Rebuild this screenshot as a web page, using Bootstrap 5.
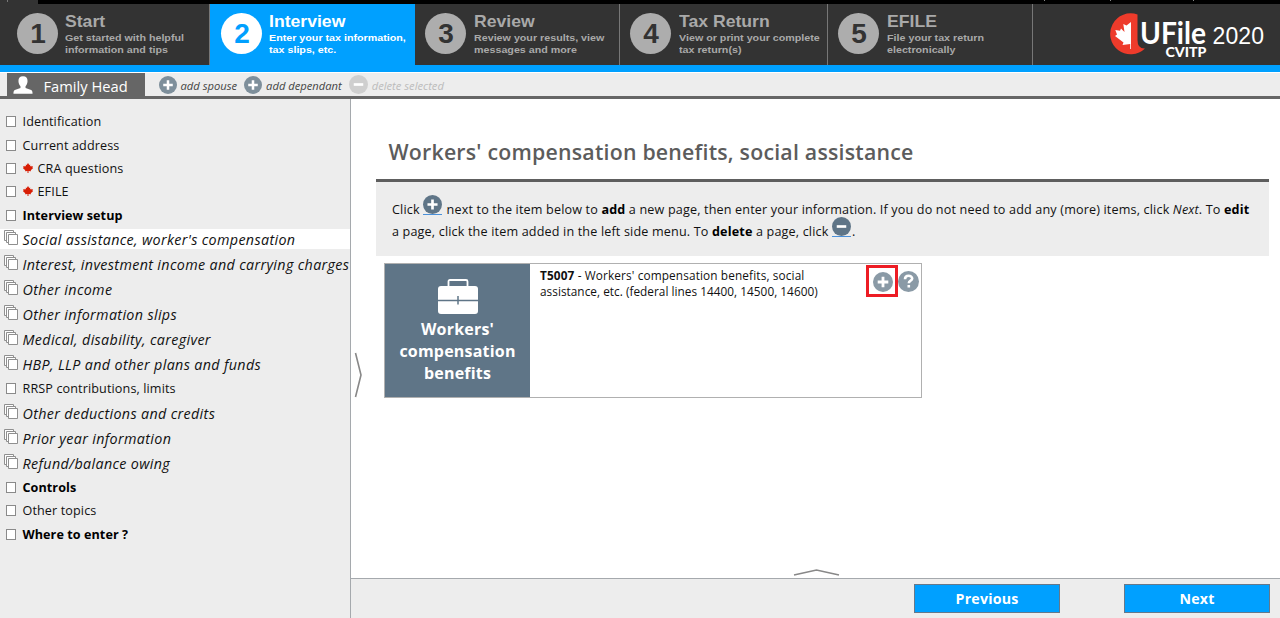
<!DOCTYPE html>
<html lang="en">
<head>
<meta charset="utf-8">
<meta name="viewport" content="width=device-width, initial-scale=1">
<title>UFile 2020 - Interview</title>
<link href="https://cdn.jsdelivr.net/npm/bootstrap@5.3.0/dist/css/bootstrap.min.css" rel="stylesheet">
<style>
body{font-family:"Open Sans","Noto Sans",sans-serif;font-size:12.6px;line-height:16px;color:#111;height:618px;overflow:hidden;background:#fff}
.topline{height:4px;background:linear-gradient(#888,#888) 1044px 0/1px 1px no-repeat,linear-gradient(#888,#888) 1110px 0/1px 1px no-repeat,linear-gradient(#888,#888) 1193px 0/1px 1px no-repeat,#000}
.topline i{width:38px;height:4px;background:linear-gradient(#777,#777) 7px 0/1px 2px no-repeat,#333}
.steps{height:61px;background:#333;font-family:"Liberation Sans",Arial,sans-serif;font-weight:700;color:#a9a9a9}
.step{border-right:1px solid #777;padding-left:10px;flex:none;white-space:nowrap;width:205px}
.step.first{width:210px;padding-left:17px}
.step.on{background:#00a0ff;color:#fff;border-color:#00a0ff;padding-left:11px}
.step.wide{width:208px}
.num{width:41px;height:41px;border-radius:50%;background:#adadad;color:#333;font-size:28px;line-height:41px;text-align:center;flex:none;margin:9px 8px 0 0;padding-left:1px}
.first .num,.on .num{margin-right:7px}
.on .num{background:#fff;color:#00a0ff}
.st-t{font-size:16.5px;line-height:17px;margin:9px 0 2px;transform:scaleX(1.067);transform-origin:0 0}
.st-d{font-size:9.8px;line-height:12px;transform:scaleX(1.093);transform-origin:0 0}
.bluebar{height:7px;background:#00a0ff}
.tabs{height:27px;background:#ededed;border-top:1px solid #fff;border-bottom:3px solid #666;font-style:italic;font-size:11.2px;color:#444}
.tabs .txt{padding-top:3px}
.person{width:138px;height:23px;background:#666;color:#fff;font-style:normal;font-size:14.7px;margin-left:7px}
.ico-add{margin:0 4px 0 7px;fill:#7e8f9b}
.muted{color:#bcbcbc}
.side{width:351px;background:#ededed;border-right:1px solid #a5a9ad;padding-top:11.3px;flex:none;overflow:hidden}
.item{height:23.3px;padding-left:6px;white-space:nowrap;letter-spacing:.12px}
.item>span{padding-top:1px}
.item .box{width:10px;height:11px;border:1px solid #8a8a8a;background:#fff;margin-right:6.5px;flex:none}
.item.fw-bold{letter-spacing:.07px;color:#000}
.item.grp{height:25.1px;font-style:italic;font-size:14.3px;padding-left:4px;letter-spacing:.35px}
.grp svg{margin:-4px 4.5px 0 0;flex:none}
.mleaf{fill:#d81e05;margin:-2px 5px 0 0}
.item.cur{background:linear-gradient(#fff,#fff) 0 2px/100% 20px no-repeat}
.main{position:relative;background:#fff}
.ttl{font-size:21.3px;line-height:30px;font-weight:600;color:#5c5c5c;padding:38px 0 12px 12.5px;margin:0;border-bottom:3px solid #5e5e5e;letter-spacing:.215px}
.wrapx{margin:0 11px 0 25px}
.info{background:#ededed;height:74px;padding:16.5px 0 0 16px;line-height:22px;white-space:nowrap;letter-spacing:.16px}
.info svg{vertical-align:-1px;border-bottom:1px solid #4a90d9;margin:-5px 1px 0 0;fill:#5f7587}
.info b{color:#000}
.box-card{width:538px;height:135px;border:1px solid #b0b0b0;margin:7px 0 0 8px}
.tile{width:145px;background:#5f7587;color:#fff;font-weight:700;font-size:16px;line-height:22.2px;text-align:center;padding-top:15px;letter-spacing:.2px}
.slip{padding:3px 0 0 10px;font-size:11.8px;letter-spacing:.13px}
.slip .l2{letter-spacing:.03px}
.hl{width:32px;height:32px;border:3px solid #ed1c24;margin-top:1px}
.hl svg{fill:#8a9aa6;margin:4px}
.qm{margin:7px 2px 0 0}
.foot{height:40px;background:#ededed;border-top:1px solid #a5a9ad;padding:5px 10px 0 0;gap:64px}
.act{width:146px;height:29px;background:#00a0ff;border:1px solid #66788a;border-radius:0;color:#fff;font-weight:700;font-size:14.2px;line-height:27px;padding:0;letter-spacing:.2px}
.hand{position:absolute;fill:none;stroke:#888;stroke-width:1.6}
.hand.rt{left:3px;top:253px}
.hand.up{left:442px;bottom:40px}
</style>
</head>
<body class="d-flex flex-column">
<svg class="d-none">
<symbol id="plus" viewBox="0 0 20 20"><circle cx="10" cy="10" r="10"/><path d="M10 4.700v10.600M4.700 10h10.600" stroke="#fff" stroke-width="2.800"/></symbol>
<symbol id="minus" viewBox="0 0 20 20"><circle cx="10" cy="10" r="10"/><path d="M5 10h10" stroke="#fff" stroke-width="2.800"/></symbol>
<symbol id="pages" viewBox="0 0 14 15"><g fill="#fff" stroke="#8f8f8f"><path d="M.5.5h9v10h-9z"/><path d="M2.500 2.500h9v10h-9z"/><path d="M4.500 4.500h9v10h-9z"/></g></symbol>
<symbol id="leaf" viewBox="0 0 20 20"><path d="M10 0l2.500 4 2-1-.5 4 2.300-1.500.7 1.700 3-.5-1 3 1 1-4.500 4 .5 1.800-5-.7V20H9v-4.200l-5 .7.5-1.800L0 10.700l1-1-1-3 3 .5.7-1.700L6 7l-.5-4 2 1z"/></symbol>
</svg>
<div class="topline flex-shrink-0"><i class="d-block"></i></div>
<header class="steps d-flex flex-shrink-0">
 <div class="step first d-flex"><div class="num">1</div><div><div class="st-t">Start</div><div class="st-d">Get started with helpful<br>information and tips</div></div></div>
 <div class="step on d-flex"><div class="num">2</div><div><div class="st-t">Interview</div><div class="st-d">Enter your tax information,<br>tax slips, etc.</div></div></div>
 <div class="step d-flex"><div class="num">3</div><div><div class="st-t">Review</div><div class="st-d">Review your results, view<br>messages and more</div></div></div>
 <div class="step wide d-flex"><div class="num">4</div><div><div class="st-t">Tax Return</div><div class="st-d">View or print your complete<br>tax return(s)</div></div></div>
 <div class="step d-flex"><div class="num">5</div><div><div class="st-t">EFILE</div><div class="st-d">File your tax return<br>electronically</div></div></div>
 <svg class="ms-auto" width="172" height="61" viewBox="1108 4 172 61" font-family="Lato,sans-serif" fill="#fff"><path d="M1137.500 14.500A20.500 20.500 0 1 0 1145 48.500Q1137.500 49 1137.500 40z" fill="#ee3b2b"/><path d="M1131 22v27h-.8v-5l-7.700 1 1-2.500-8.500-6.500 2-1.500-1.700-4.500 4.700.8 1-2.300 3.500 3.500-1.200-8 3.200 1.500z"/><text x="1140" y="44" font-size="30.500" font-weight="700" textLength="66" lengthAdjust="spacingAndGlyphs">UFile</text><text x="1165.500" y="56.500" font-size="13" font-weight="900" textLength="41" lengthAdjust="spacingAndGlyphs">CVITP</text><text x="1212.500" y="44" font-size="23" font-weight="400" font-family="Liberation Sans,sans-serif" textLength="51.500">2020</text></svg>
</header>
<div class="bluebar flex-shrink-0"></div>
<div class="tabs d-flex flex-shrink-0">
 <div class="person d-flex align-items-center"><svg width="20" height="18" viewBox="0 0 22 19" style="margin-left:5.5px"><path fill="#fff" d="M11 0c3.500 0 5 2.200 5 5 0 2.500-1 4.500-2.200 5.800v2L20 15c1 .5 1.500 1.500 1.500 4H.5c0-2.500.5-3.500 1.500-4l6.200-2.200v-2C7 9.500 6 7.500 6 5c0-2.800 1.500-5 5-5z"/></svg><span class="txt" style="padding-left:11px">Family Head</span></div>
 <div class="d-flex align-items-center ps-2"><svg class="ico-add" width="18" height="18" style="margin-left:5.5px"><use href="#plus"/></svg><span class="txt">add spouse</span><svg class="ico-add" width="18" height="18"><use href="#plus"/></svg><span class="txt">add dependant</span><svg class="ico-add" width="19" height="19" style="fill:#cfcfcf"><use href="#minus"/></svg><span class="txt muted">delete selected</span></div>
</div>
<div class="d-flex flex-grow-1">
<nav class="side">
 <div class="item d-flex align-items-center"><i class="box"></i><span>Identification</span></div>
 <div class="item d-flex align-items-center"><i class="box"></i><span>Current address</span></div>
 <div class="item d-flex align-items-center"><i class="box"></i><svg class="mleaf" width="10" height="10"><use href="#leaf"/></svg><span>CRA questions</span></div>
 <div class="item d-flex align-items-center"><i class="box"></i><svg class="mleaf" width="10" height="10"><use href="#leaf"/></svg><span>EFILE</span></div>
 <div class="item d-flex align-items-center fw-bold"><i class="box"></i><span>Interview setup</span></div>
 <div class="item grp cur d-flex align-items-center"><svg width="14" height="15"><use href="#pages"/></svg><span>Social assistance, worker's compensation</span></div>
 <div class="item grp d-flex align-items-center"><svg width="14" height="15"><use href="#pages"/></svg><span>Interest, investment income and carrying charges</span></div>
 <div class="item grp d-flex align-items-center"><svg width="14" height="15"><use href="#pages"/></svg><span>Other income</span></div>
 <div class="item grp d-flex align-items-center"><svg width="14" height="15"><use href="#pages"/></svg><span>Other information slips</span></div>
 <div class="item grp d-flex align-items-center"><svg width="14" height="15"><use href="#pages"/></svg><span>Medical, disability, caregiver</span></div>
 <div class="item grp d-flex align-items-center"><svg width="14" height="15"><use href="#pages"/></svg><span>HBP, LLP and other plans and funds</span></div>
 <div class="item d-flex align-items-center"><i class="box"></i><span>RRSP contributions, limits</span></div>
 <div class="item grp d-flex align-items-center"><svg width="14" height="15"><use href="#pages"/></svg><span>Other deductions and credits</span></div>
 <div class="item grp d-flex align-items-center"><svg width="14" height="15"><use href="#pages"/></svg><span>Prior year information</span></div>
 <div class="item grp d-flex align-items-center"><svg width="14" height="15"><use href="#pages"/></svg><span>Refund/balance owing</span></div>
 <div class="item d-flex align-items-center fw-bold"><i class="box"></i><span>Controls</span></div>
 <div class="item d-flex align-items-center"><i class="box"></i><span>Other topics</span></div>
 <div class="item d-flex align-items-center fw-bold"><i class="box"></i><span>Where to enter ?</span></div>
</nav>
<main class="main flex-grow-1 d-flex flex-column">
 <div class="wrapx">
  <h1 class="ttl">Workers' compensation benefits, social assistance</h1>
  <div class="info">Click <svg width="19" height="20"><use href="#plus"/></svg> next to the item below to <b>add</b> a new page, then enter your information. If you do not need to add any (more) items, click <i>Next</i>. To <b>edit</b><br>a page, click the item added in the left side menu. To <b>delete</b> a page, click <svg width="19" height="20"><use href="#minus"/></svg>.</div>
  <div class="box-card d-flex">
   <div class="tile"><svg class="d-block mx-auto" width="40" height="35" viewBox="0 0 40 35"><path d="M10.500 7V2.500Q10.500 1 12 1h16Q29.500 1 29.500 2.500V7" fill="none" stroke="#fff" stroke-width="1.800"/><rect y="7" width="40" height="28" rx="3" fill="#fff"/><path d="M0 21.500h40M20 17v8.500" stroke="#5f7587" stroke-width="1.500"/></svg><div class="pt-1">Workers'<br>compensation<br>benefits</div></div>
   <div class="slip"><b>T5007</b> - Workers' compensation benefits, social<br><span class="l2">assistance, etc. (federal lines 14400, 14500, 14600)</span></div>
   <div class="ms-auto d-flex"><div class="hl"><svg class="d-block" width="20" height="20"><use href="#plus"/></svg></div><svg class="qm" width="21" height="21" viewBox="0 0 21 21"><circle cx="10.500" cy="10.500" r="10.500" fill="#8a9aa6"/><path d="M7 8.200c0-4.600 7.200-4.300 7.200-.6 0 2.200-3.400 2-3.400 4.600M10.800 14v2.600" stroke="#fff" stroke-width="2.600" fill="none"/></svg></div>
  </div>
 </div>
 <svg class="hand rt" width="10" height="46"><path d="M1.500 1l5.500 22-5.500 22"/></svg>
 <svg class="hand up" width="48" height="10"><path d="M1 7l22.500-5L46 7"/></svg>
 <footer class="foot d-flex justify-content-end mt-auto"><button class="btn act">Previous</button><button class="btn act">Next</button></footer>
</main>
</div>
<script src="https://cdn.jsdelivr.net/npm/bootstrap@5.3.0/dist/js/bootstrap.bundle.min.js"></script>
</body>
</html>
